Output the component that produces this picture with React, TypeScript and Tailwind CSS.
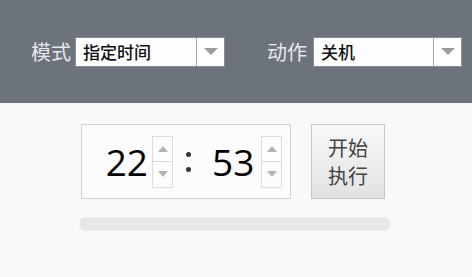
import React from "react";

const cjk = { fontFamily: '"Noto Sans CJK SC", "Noto Sans", sans-serif' };
const num = { fontFamily: '"Open Sans", "Noto Sans", sans-serif' };

function Combo({ value, width }: { value: string; width: string }) {
  return (
    <div className={`flex h-[30px] ${width} border border-[#8a8d91] bg-[#fdfdfd]`}>
      <div className="flex flex-1 items-center pl-[7px] text-[17px] font-medium leading-none text-[#111]" style={cjk}>
        {value}
      </div>
      <div className="flex w-[28px] items-center justify-center border-l border-[#a0a3a7] bg-white">
        <svg width="14" height="7" viewBox="0 0 14 7">
          <path d="M0 0 H14 L7 7 Z" fill="#9c9c9c" />
        </svg>
      </div>
    </div>
  );
}

function Spinner() {
  return (
    <div className="flex h-[52px] w-[21px] flex-col border border-[#dcdcdc] bg-[#fdfdfd]">
      <div className="flex flex-1 items-center justify-center border-b border-[#dcdcdc]">
        <svg width="10" height="6" viewBox="0 0 10 6">
          <path d="M0 6 H10 L5 0 Z" fill="#b4b4b4" />
        </svg>
      </div>
      <div className="flex flex-1 items-center justify-center">
        <svg width="10" height="6" viewBox="0 0 10 6">
          <path d="M0 0 H10 L5 6 Z" fill="#b4b4b4" />
        </svg>
      </div>
    </div>
  );
}

export default function App() {
  return (
    <div className="flex h-[277px] w-[472px] flex-col bg-[#f9f9f9]">
      <div className="flex h-[103px] items-center bg-[#6c737d] pl-[31px]" style={cjk}>
        <div className="flex items-center">
          <span className="mr-[4px] text-[20px] leading-none text-[#e6e8ea]">模式</span>
          <Combo value="指定时间" width="w-[150px]" />
        </div>
        <div className="ml-[42px] flex items-center">
          <span className="mr-[6px] text-[20px] leading-none text-[#e6e8ea]">动作</span>
          <Combo value="关机" width="w-[149px]" />
        </div>
      </div>
      <div className="flex flex-col items-center pt-[21px]">
        <div className="mr-[2px] flex w-[312px] flex-col">
          <div className="flex pl-[2px]">
            <div className="flex h-[75px] w-[210px] items-center border border-[#d2d2d2] bg-[#fcfcfc]">
              <div className="ml-[22px] w-[44px] text-right text-[37px] leading-none text-black" style={num}>
                22
              </div>
              <div className="ml-[4px]">
                <Spinner />
              </div>
              <div className="ml-[13px] flex flex-col gap-[10px]">
                <div className="h-[5px] w-[5px] rounded-full bg-[#333]" />
                <div className="h-[5px] w-[5px] rounded-full bg-[#333]" />
              </div>
              <div className="ml-[21px] w-[44px] text-left text-[37px] leading-none text-black" style={num}>
                53
              </div>
              <div className="ml-[5px]">
                <Spinner />
              </div>
            </div>
            <button
              className="ml-[20px] flex h-[75px] w-[74px] flex-col items-center justify-center border border-[#c9c9c9] bg-gradient-to-b from-[#f8f8f8] to-[#e2e2e2] text-[20px] leading-[28px] text-[#444]"
              style={cjk}
            >
              <span>开始</span>
              <span>执行</span>
            </button>
          </div>
          <div className="mt-[18px] h-[14px] w-[312px] rounded-full bg-[#e8e8e8]" />
        </div>
      </div>
    </div>
  );
}
